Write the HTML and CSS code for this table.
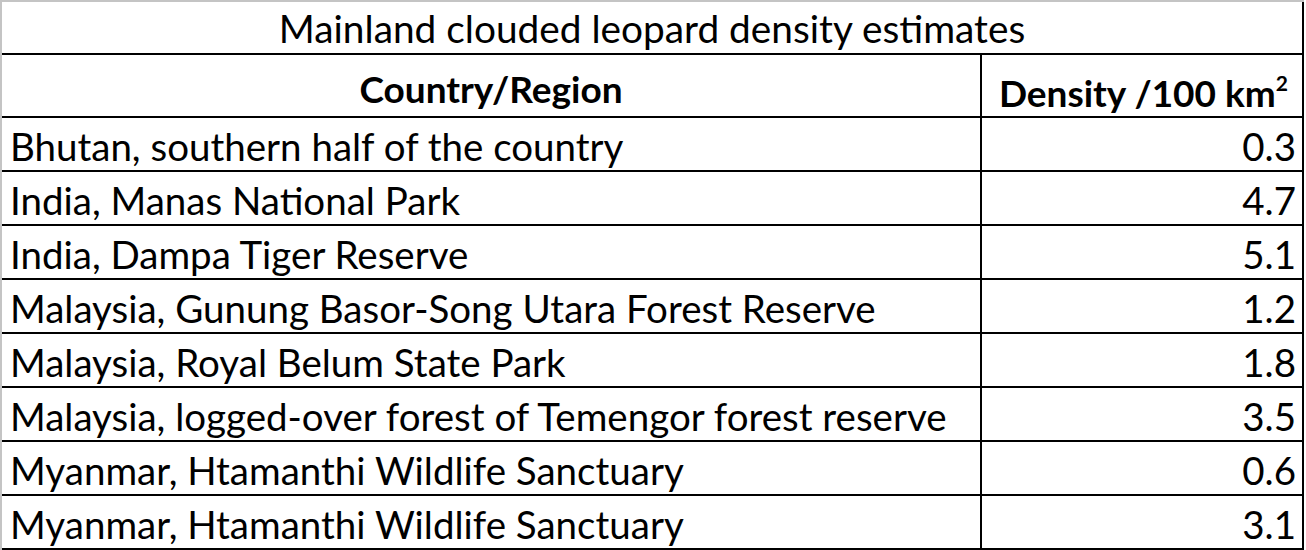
FILE: index.html
```html
<!DOCTYPE html>
<html lang="en">
<head>
<meta charset="utf-8">
<title>Mainland clouded leopard density estimates</title>
<link rel="stylesheet" href="styles.css">
</head>
<body>
<div class="sheet">
  <table class="density">
    <colgroup>
      <col class="col-a">
      <col class="col-b">
    </colgroup>
    <thead>
      <tr class="title-row">
        <th colspan="2" class="title">Mainland clouded leopard density estimates</th>
      </tr>
      <tr class="head-row">
        <th class="col-region">Country/Region</th>
        <th class="col-density">Density /100 km<sup>2</sup></th>
      </tr>
    </thead>
    <tbody>
      <tr><td class="region">Bhutan, southern half of the country</td><td class="value">0.3</td></tr>
      <tr><td class="region">India, Manas National Park</td><td class="value">4.7</td></tr>
      <tr><td class="region">India, Dampa Tiger Reserve</td><td class="value">5.1</td></tr>
      <tr><td class="region">Malaysia, Gunung Basor-Song Utara Forest Reserve</td><td class="value">1.2</td></tr>
      <tr><td class="region">Malaysia, Royal Belum State Park</td><td class="value">1.8</td></tr>
      <tr><td class="region">Malaysia, logged-over forest of Temengor forest reserve</td><td class="value">3.5</td></tr>
      <tr><td class="region">Myanmar, Htamanthi Wildlife Sanctuary</td><td class="value">0.6</td></tr>
      <tr><td class="region">Myanmar, Htamanthi Wildlife Sanctuary</td><td class="value">3.1</td></tr>
    </tbody>
  </table>
</div>
</body>
</html>
```

FILE: styles.css
```css
html, body {
  margin: 0;
  padding: 0;
  background: #ffffff;
}

body {
  font-family: Lato, "Open Sans", "Liberation Sans", sans-serif;
  color: #000000;
  width: 1306px;
  height: 550px;
  overflow: hidden;
}

.sheet {
  width: 1302px;
  border-left: 2px solid #c4c4c4;
  border-top: 2px solid #c4c4c4;
}

.density {
  border-collapse: separate;
  border-spacing: 0;
  table-layout: fixed;
  width: 1302px;
}

.col-a {
  width: 980px;
}

.col-b {
  width: 322px;
}

.density th,
.density td {
  padding: 0;
  border-right: 2px solid #000000;
  border-bottom: 2px solid #000000;
  box-sizing: border-box;
  white-space: nowrap;
  overflow: hidden;
}

.title-row th {
  height: 53px;
  font-weight: 400;
  font-size: 38.8px;
  text-align: center;
  vertical-align: middle;
  padding-top: 1px;
}

.head-row th {
  height: 63px;
  font-weight: 700;
  font-size: 37px;
  vertical-align: bottom;
  padding-bottom: 6px;
  line-height: 1.1;
}

.col-region {
  text-align: center;
}

.head-row .col-density {
  text-align: right;
  padding-right: 14px;
  padding-bottom: 2px;
}

.col-density sup {
  font-size: 21px;
  vertical-align: 16px;
  line-height: 0;
}

.density td {
  height: 54px;
  font-size: 38.5px;
  vertical-align: middle;
  padding-top: 3px;
}

.density td.region {
  text-align: left;
  padding-left: 8px;
}

.density td.value {
  text-align: right;
  padding-right: 6px;
}
```
